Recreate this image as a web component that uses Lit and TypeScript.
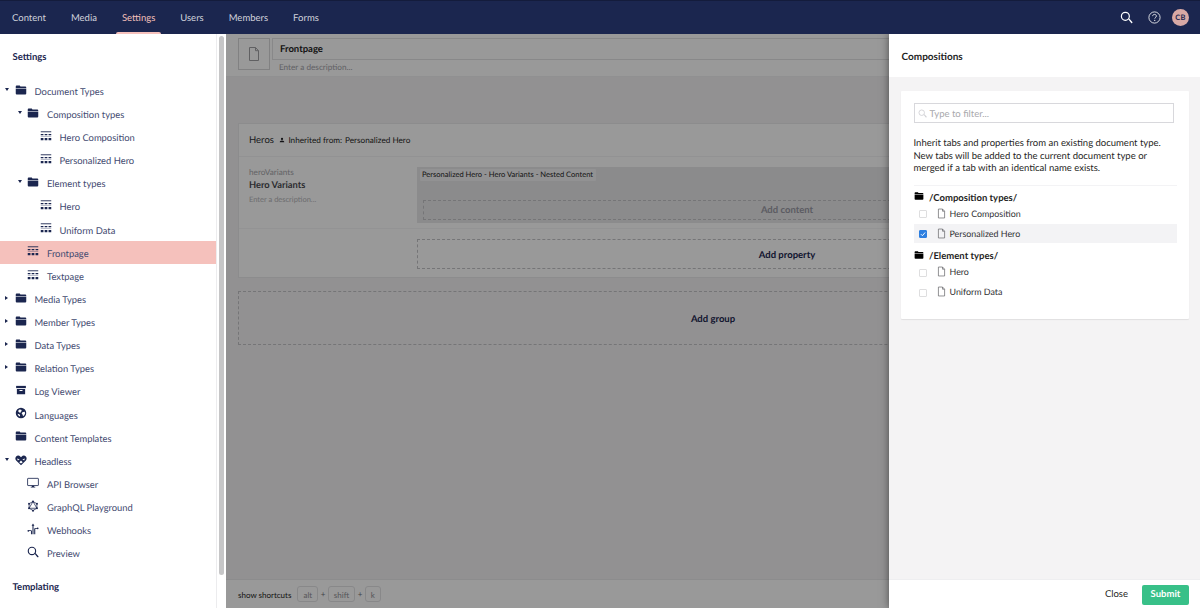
import { LitElement, html, css, svg } from "lit";
import { customElement } from "lit/decorators.js";

const folder = svg`<path d="M1 3.200C1 2.500 1.500 2 2.200 2h3.600c.5 0 .8.200 1 .6l.4.7h6.600c.7 0 1.200.5 1.200 1.200v1.200H1z"/><path d="M1 6.400h14v6.400c0 .7-.5 1.200-1.200 1.200H2.200C1.500 14 1 13.500 1 12.800z"/>`;
const grid = svg`<path d="M1 1.800h14V3H1z"/><path d="M1 5.200h3.600v1.900H1zM6.200 5.200h3.600v1.900H6.200zM11.400 5.200h3.600v1.900h-3.600z"/><path d="M1 8.200h14v.8H1z" opacity=".5"/><path d="M1 10.800h3.600v3H1zM6.200 10.800h3.600v3H6.200zM11.400 10.800h3.600v3h-3.600z"/>`;
const archive = svg`<path d="M1.500 2.500h13v3h-13z"/><path d="M2.500 6.500h11v7h-11zM6 8v1.300h4V8z" fill-rule="evenodd"/>`;
const globe = svg`<path fill-rule="evenodd" d="M8 1a7 7 0 1 0 0 14A7 7 0 0 0 8 1zM6 3.200l2.300.6.700 1.500-1.300 1-.3 1.400-1.800-.5-1.400-1.400.5-1.500zm4.700 3.300 2.300-.3.500 2.300-1.200 2.600-1.600 1.200-.5-2-1.300-1.500.6-1.500zM3.500 9l2 .5 1.300 1.300-.3 2-1.300-.9-1.300-1.700z"/>`;
const heart = svg`<path fill-rule="evenodd" d="M8 15 1.500 8.500C.2 7.100.1 4.800 1.500 3.300 3 1.800 5.600 1.800 7 3.200l1 1 1-1c1.400-1.400 4-1.400 5.500.1 1.400 1.500 1.300 3.800 0 5.200zM3.300 5.500l3 2.400-3 .3zm9.400 0-3 2.400 3 .3zM8 8.800 5.700 10.900 8 12.600l2.300-1.700z"/>`;
const monitor = svg`<rect x=".8" y="1.800" width="14.400" height="9.600" rx=".6" fill="none" stroke="currentColor" stroke-width="1.100"/><path d="M6.500 11.500h3V13h1.500v1H5v-1h1.500z"/>`;
const graphql = svg`<path d="M8 2 13.200 5v6L8 14l-5.200-3V5zM8 2 2.800 11h10.400z" fill="none" stroke="currentColor" stroke-width="1"/><circle cx="8" cy="1.800" r="1.300"/><circle cx="13.300" cy="4.900" r="1.300"/><circle cx="13.300" cy="11.100" r="1.300"/><circle cx="8" cy="14.200" r="1.300"/><circle cx="2.700" cy="11.100" r="1.300"/><circle cx="2.700" cy="4.900" r="1.300"/>`;
const webhook = svg`<path d="M7.300 3.500H6.100L8 .8l1.900 2.700H8.700V15H7.300z"/><path d="M9.600 15V8.200c0-1 .8-1.700 1.800-1.700h2v1.300h-1.900c-.3 0-.5.200-.5.500V15z"/><path d="M2 9.500h3.100c.9 0 1.500.7 1.500 1.500v4H5.300v-3.700c0-.3-.2-.5-.5-.5H2.500z"/><circle cx="1.800" cy="10.400" r="1.200"/><circle cx="14.200" cy="7.100" r="1.200"/>`;
const search = svg`<circle cx="6.600" cy="6.600" r="4.900" fill="none" stroke="currentColor" stroke-width="1.500"/><path d="m10.200 10.200 1.200-1 3.800 4.300c.3.400.3.800 0 1.100l-.3.300c-.3.300-.8.300-1.100 0z"/>`;
const docOutline = svg`<path d="M3.500 1.500h6l3 3.200v9.800h-9z M9.500 1.500v3.200h3" fill="none" stroke="currentColor" stroke-width="1"/>`;

type Row = { label: string; depth: number; icon: unknown; caret?: "open" | "closed"; active?: boolean };
const rows: Row[] = [
  { label: "Document Types", depth: 0, icon: folder, caret: "open" },
  { label: "Composition types", depth: 1, icon: folder, caret: "open" },
  { label: "Hero Composition", depth: 2, icon: grid },
  { label: "Personalized Hero", depth: 2, icon: grid },
  { label: "Element types", depth: 1, icon: folder, caret: "open" },
  { label: "Hero", depth: 2, icon: grid },
  { label: "Uniform Data", depth: 2, icon: grid },
  { label: "Frontpage", depth: 1, icon: grid, active: true },
  { label: "Textpage", depth: 1, icon: grid },
  { label: "Media Types", depth: 0, icon: folder, caret: "closed" },
  { label: "Member Types", depth: 0, icon: folder, caret: "closed" },
  { label: "Data Types", depth: 0, icon: folder, caret: "closed" },
  { label: "Relation Types", depth: 0, icon: folder, caret: "closed" },
  { label: "Log Viewer", depth: 0, icon: archive },
  { label: "Languages", depth: 0, icon: globe },
  { label: "Content Templates", depth: 0, icon: folder },
  { label: "Headless", depth: 0, icon: heart, caret: "open" },
  { label: "API Browser", depth: 1, icon: monitor },
  { label: "GraphQL Playground", depth: 1, icon: graphql },
  { label: "Webhooks", depth: 1, icon: webhook },
  { label: "Preview", depth: 1, icon: search },
];

const groups = [
  { name: "/Composition types/", items: [{ n: "Hero Composition" }, { n: "Personalized Hero", on: true }] },
  { name: "/Element types/", items: [{ n: "Hero" }, { n: "Uniform Data" }] },
];

@customElement("app-root")
export class AppRoot extends LitElement {
  static styles = css`
    :host { display: block; width: 1200px; height: 608px; overflow: hidden; font-family: Lato, "Open Sans", sans-serif; color: #1b264f; background: #fff; text-rendering: geometricPrecision; }
    * { box-sizing: border-box; }
    svg { display: block; fill: currentColor; flex: none; }
    .top { height: 34px; background: #1b264f; display: flex; align-items: stretch; padding: 0 11px 0 12px; border-top: 1px solid #141c3c; }
    .nav { display: flex; gap: 25px; flex: 1; }
    .nav span { color: #d1d3dc; font-size: 9.500px; display: flex; align-items: center; position: relative; padding-top: 1.500px; }
    .nav .on { color: #f5c1bc; }
    .nav .on::after { content: ""; position: absolute; left: -6px; right: -6px; bottom: 0; height: 2px; background: #f5c1bc; border-radius: 2px 2px 0 0; }
    .tools { display: flex; align-items: center; gap: 15px; color: #fff; }
    .avatar { width: 17px; height: 17px; border-radius: 50%; background: #d8a9a5; color: #1b264f; font-size: 7.500px; font-weight: 700; display: flex; align-items: center; justify-content: center; margin-left: -4px; letter-spacing: .2px; }
    .body { display: flex; height: 574px; position: relative; }
    .side { width: 225px; flex: none; display: flex; background: #fff; overflow: hidden; }
    .tree { width: 216px; flex: none; padding-top: 13px; }
    .rail { width: 9px; flex: none; padding: 2px 2px 0 2px; border-left: 1px solid #ececee; }
    .thumb { width: 5px; height: 539px; background: #c6c6c7; border-radius: 3px; }
    .h { font-size: 9.500px; font-weight: 700; padding-left: 12.500px; height: 19px; line-height: 21px; }
    .rows { padding-top: 13px; }
    .row { height: 23.130px; display: flex; align-items: center; font-size: 9.400px; color: #3f4a70; position: relative; padding-top: 3.400px; }
    .row.active { background: #f5c1bc; }
    .row svg.i { width: 12px; height: 12px; color: #1b264f; margin-right: 8px; position: relative; top: -2.700px; }
    .caret { position: absolute; width: 0; height: 0; top: 8.500px; }
    .caret.open { border-left: 2.500px solid transparent; border-right: 2.500px solid transparent; border-top: 3px solid #1b264f; }
    .caret.closed { border-top: 2.500px solid transparent; border-bottom: 2.500px solid transparent; border-left: 3px solid #1b264f; }
    .templ { margin-top: 12.500px; }

    .main { flex: 1; position: relative; background: #f4f2f3; display: flex; flex-direction: column; overflow: hidden; border-left: 1px solid #fff; color: #1b264f; }
    .mh { height: 43px; background: #fff; display: flex; flex: none; padding: 4px 0 0 12px; gap: 2px; border-bottom: 1px solid #f0f0f2; }
    .doc { width: 32px; height: 32px; border: 1px solid #d8d7d9; display: flex; align-items: center; justify-content: center; color: #a0a0a4; }
    .doc svg { width: 16px; height: 16px; }
    .mt { flex: 1; font-size: 9.500px; }
    .name { height: 22px; border: 1px solid #e3e3e5; border-right: none; padding-left: 7px; line-height: 22px; font-weight: 700; color: #1f1f25; }
    .desc { font-size: 8.200px; color: #a3a3a9; padding: 2px 0 0 7px; }
    .content { flex: 1; padding: 46px 12px 0 12px; display: flex; flex-direction: column; gap: 13px; }
    .card { background: #fff; border: 1px solid #e9e9eb; height: 155px; flex: none; width: 950px; }
    .cardh { height: 33px; display: flex; align-items: center; padding-left: 10px; border-bottom: 1px solid #f3f3f5; font-size: 8.200px; color: #1f1f25; }
    .cardh b { font-size: 9.500px; font-weight: 400; margin-right: 5.500px; color: #303033; }
    .cardh svg { width: 6px; height: 6px; margin-right: 3px; color: #1f1f25; }
    .cardh .sp { margin-left: 3px; }
    .prop { display: grid; grid-template-columns: 168px 740px; padding: 8.500px 0 0 10px; height: 72px; border-bottom: 1px solid #f6f6f7; margin-right: 10px; align-items: start; }
    .pl { display: flex; flex-direction: column; font-size: 9.300px; }
    .alias { color: #a5a5a9; font-size: 8.200px; line-height: 12px; }
    .ln { font-weight: 700; color: #4a4a50; line-height: 14px; font-size: 9.300px; }
    .pd { color: #b4b4b8; font-size: 7.500px; line-height: 12px; margin-top: 2.500px; }
    .nest { background: #e8e8ea; height: 56px; margin-top: 1px; display: flex; flex-direction: column; padding: 2.500px 0 0 3px; }
    .tag { background: #f3f3f5; align-self: flex-start; padding: 0 3px 0 2px; font-size: 7.550px; line-height: 11px; height: 11.500px; color: #1f1f25; border-radius: 1px; white-space: nowrap; }
    .addc { margin: 19px 0 0 3px; height: 20px; border: 1px dashed #c3c3c7; display: flex; align-items: center; justify-content: center; font-size: 9.500px; font-weight: 700; color: #9a9aa5; width: 728px; padding-top: 2px; }
    .addp { margin-left: 178px; width: 740px; height: 30px; border: 1px dashed #c3c3c7; display: flex; align-items: center; justify-content: center; font-size: 9.500px; font-weight: 700; color: #1b264f; margin-top: 10px; padding-top: 2px; }
    .addg { width: 950px; height: 54px; border: 1px dashed #c3c3c7; display: flex; align-items: center; justify-content: center; font-size: 9.500px; font-weight: 700; flex: none; padding-top: 2px; }
    .foot { height: 29px; flex: none; background: #fff; border-top: 1px solid #e9e9eb; display: flex; align-items: center; padding-left: 12px; font-size: 8px; color: #1f1f25; }
    .foot > span { padding-top: 1.500px; }
    .keys { display: flex; align-items: center; margin-left: 6px; gap: 2.500px; }
    .keys i { font-style: normal; border: 1px solid #e3e3e5; border-radius: 3px; height: 16px; padding: 1px 5px 0; display: flex; align-items: center; color: #909095; font-size: 8px; line-height: 1; }
    .keys u { text-decoration: none; font-size: 8px; color: #707075; }
    .scrim { position: absolute; inset: 0; background: rgba(0,0,0,.4); }
    .panel { position: absolute; right: 0; top: 0; bottom: 0; width: 311px; background: #f4f3f4; display: flex; flex-direction: column; box-shadow: 0 0 8px rgba(0,0,0,.5); color: #1f1f25; }
    .ph { height: 43px; background: #fff; flex: none; display: flex; align-items: center; padding: 2px 12.500px 0; font-size: 10px; font-weight: 700; }
    .pb { flex: 1; padding: 14px 11px 0 12px; }
    .box { background: #fff; height: 228px; width: 288px; padding: 12px 12.500px 0 12.500px; box-shadow: 0 1px 1px rgba(0,0,0,.08); border-radius: 1px; }
    .filter { width: 260px; height: 20px; border: 1px solid #d8d8dc; border-bottom-width: 1.500px; display: flex; align-items: center; padding: 2px 0 0 3px; font-size: 9.500px; color: #a8a8ac; gap: 3px; }
    .filter svg { width: 9px; height: 9px; color: #d0d0d4; margin-top: -2px; }
    .help { font-size: 9.500px; line-height: 12.500px; color: #1f1f25; margin: 15px 0 0 0; width: 263px; padding-bottom: 9px; border-bottom: 1px solid #f3f3f5; white-space: nowrap; }
    .g { margin-top: 5px; }
    .g + .g { margin-top: 6.500px; }
    .gt { display: flex; align-items: center; height: 13px; font-size: 9.500px; font-weight: 700; color: #1f1f25; gap: 5px; padding: 2px 0 0 0.500px; }
    .gt svg { width: 10px; height: 10px; color: #000; position: relative; top: -2px; }
    .it { height: 19px; display: flex; align-items: center; font-size: 8.900px; padding-left: 5.500px; color: #303033; width: 263px; margin-bottom: 1px; }
    .it.on { background: #f3f3f5; }
    .cb { width: 8px; height: 8px; border: 1px solid #dededf; border-radius: 1px; margin-right: 9px; margin-top: 2px; background: #fff; }
    .cb.on { background: #2d7fe0; border-color: #2d7fe0; color: #fff; display: flex; align-items: center; justify-content: center; }
    .cb svg { width: 6px; height: 6px; }
    .it .d { width: 11px; height: 11px; color: #606065; margin-right: 2.500px; }
    .pf { height: 29px; background: #fff; flex: none; border-top: 1px solid #eeeef0; display: flex; justify-content: flex-end; align-items: center; padding: 1px 11px 0 0; font-size: 9.500px; gap: 14px; }
    .submit { width: 47px; height: 20px; background: #38c088; color: #fff; font-weight: 700; border-radius: 2px; display: flex; align-items: center; justify-content: center; }
  `;

  render() {
    return html`
      <div class="top">
        <div class="nav">
          ${["Content", "Media", "Settings", "Users", "Members", "Forms"].map(
            (n) => html`<span class=${n === "Settings" ? "on" : ""}>${n}</span>`
          )}
        </div>
        <div class="tools">
          <svg width="13" height="13" viewBox="0 0 16 16">${search}</svg>
          <svg width="13" height="13" viewBox="0 0 16 16"><circle cx="8" cy="8" r="6.900" fill="none" stroke="currentColor" stroke-width="1"/><path d="M5.700 6.300C5.800 4.900 6.800 4.200 8 4.200c1.300 0 2.300.8 2.300 2 0 1-.6 1.500-1.300 2-.5.300-.6.600-.6 1.200" fill="none" stroke="currentColor" stroke-width="1"/><circle cx="8.300" cy="11.500" r=".8"/></svg>
          <div class="avatar">CB</div>
        </div>
      </div>
      <div class="body">
        <div class="side">
          <div class="tree">
            <div class="h">Settings</div>
            <div class="rows">
              ${rows.map((r) => {
                const pad = r.depth === 0 ? 14.5 : r.depth === 1 ? 27 : 39.5;
                const cx = r.depth === 0 ? 5 : 17.5;
                return html`<div class="row ${r.active ? "active" : ""}" style="padding-left:${pad}px">
                  ${r.caret ? html`<span class="caret ${r.caret}" style="left:${cx}px"></span>` : ""}
                  <svg class="i" viewBox="0 0 16 16">${r.icon}</svg>
                  <span>${r.label}</span>
                </div>`;
              })}
            </div>
            <div class="h templ">Templating</div>
          </div>
          <div class="rail"><div class="thumb"></div></div>
        </div>
        <div class="main">
          <div class="mh">
            <div class="doc"><svg viewBox="0 0 16 16">${docOutline}</svg></div>
            <div class="mt">
              <div class="name">Frontpage</div>
              <div class="desc">Enter a description...</div>
            </div>
          </div>
          <div class="content">
            <div class="card">
              <div class="cardh">
                <b>Heros</b>
                <svg viewBox="0 0 16 16"><circle cx="8" cy="5" r="3"/><path d="M2 14c0-3 2-5 6-5s6 2 6 5z"/></svg>
                <span>Inherited from:</span><span class="sp">Personalized Hero</span>
              </div>
              <div class="prop">
                <div class="pl">
                  <span class="alias">heroVariants</span>
                  <span class="ln">Hero Variants</span>
                  <span class="pd">Enter a description...</span>
                </div>
                <div class="nest">
                  <span class="tag">Personalized Hero - Hero Variants - Nested Content</span>
                  <div class="addc">Add content</div>
                </div>
              </div>
              <div class="addp">Add property</div>
            </div>
            <div class="addg">Add group</div>
          </div>
          <div class="foot">
            <span>show shortcuts</span>
            <div class="keys"><i>alt</i><u>+</u><i>shift</i><u>+</u><i>k</i></div>
          </div>
          <div class="scrim"></div>
          <div class="panel">
            <div class="ph">Compositions</div>
            <div class="pb">
              <div class="box">
                <div class="filter"><svg viewBox="0 0 16 16">${search}</svg><span>Type to filter...</span></div>
                <p class="help">Inherit tabs and properties from an existing document type.<br />New tabs will be added to the current document type or<br />merged if a tab with an identical name exists.</p>
                ${groups.map(
                  (g) => html`<div class="g">
                    <div class="gt"><svg viewBox="0 0 16 16">${folder}</svg><span>${g.name}</span></div>
                    ${g.items.map(
                      (it) => html`<div class="it ${it.on ? "on" : ""}">
                        <span class="cb ${it.on ? "on" : ""}">${it.on
                          ? html`<svg viewBox="0 0 16 16"><path d="M2.500 8.500 6.500 12.500 13.500 4" fill="none" stroke="currentColor" stroke-width="2.500"/></svg>`
                          : ""}</span>
                        <svg class="d" viewBox="0 0 16 16">${docOutline}</svg>
                        <span>${it.n}</span>
                      </div>`
                    )}
                  </div>`
                )}
              </div>
            </div>
            <div class="pf"><span>Close</span><div class="submit">Submit</div></div>
          </div>
        </div>
      </div>
    `;
  }
}
